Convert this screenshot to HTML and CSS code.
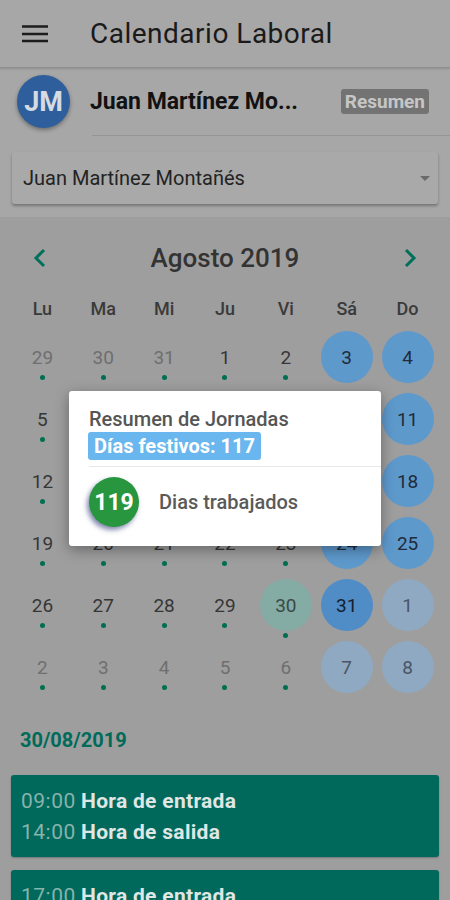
FILE: index.html
```html
<!DOCTYPE html>
<html lang="es">
<head>
<meta charset="utf-8">
<link rel="stylesheet" href="styles.css">
</head>
<body>
<div class="screen">
  <header class="appbar">
    <svg class="menu" width="26" height="20" viewBox="0 0 26 20"><path d="M0 2.5H26M0 10H26M0 17H26" stroke="#1c1c1c" stroke-width="2.6"/></svg>
    <h1 class="title">Calendario Laboral</h1>
  </header>
  <section class="top">
    <div class="user">
      <div class="avatar">JM</div>
      <div class="uname">Juan Martínez Mo...</div>
      <span class="badge">Resumen</span>
    </div>
    <div class="divider"></div>
    <div class="select">
      <span>Juan Martínez Montañés</span>
      <svg width="10" height="5" viewBox="0 0 10 5"><path d="M0 0H10L5 5Z" fill="#6a6a6a"/></svg>
    </div>
  </section>
  <section class="cal">
    <div class="month">
      <svg width="14" height="20" viewBox="0 0 14 20"><path d="M11 2L3 10L11 18" fill="none" stroke="#00705a" stroke-width="3"/></svg>
      <span class="mtitle">Agosto 2019</span>
      <svg width="14" height="20" viewBox="0 0 14 20"><path d="M3 2L11 10L3 18" fill="none" stroke="#00705a" stroke-width="3"/></svg>
    </div>
    <div class="week">
      <span>Lu</span><span>Ma</span><span>Mi</span><span>Ju</span><span>Vi</span><span>Sá</span><span>Do</span>
    </div>
    <div class="grid">
      <div class="cell other"><span class="n">29</span><i class="dot"></i></div>
      <div class="cell other"><span class="n">30</span><i class="dot"></i></div>
      <div class="cell other"><span class="n">31</span><i class="dot"></i></div>
      <div class="cell"><span class="n">1</span><i class="dot"></i></div>
      <div class="cell"><span class="n">2</span><i class="dot"></i></div>
      <div class="cell"><span class="n c">3</span></div>
      <div class="cell"><span class="n c">4</span></div>

      <div class="cell"><span class="n">5</span><i class="dot"></i></div>
      <div class="cell"><span class="n">6</span><i class="dot"></i></div>
      <div class="cell"><span class="n">7</span><i class="dot"></i></div>
      <div class="cell"><span class="n">8</span><i class="dot"></i></div>
      <div class="cell"><span class="n">9</span><i class="dot"></i></div>
      <div class="cell"><span class="n c">10</span></div>
      <div class="cell"><span class="n c">11</span></div>

      <div class="cell"><span class="n">12</span><i class="dot"></i></div>
      <div class="cell"><span class="n">13</span><i class="dot"></i></div>
      <div class="cell"><span class="n">14</span><i class="dot"></i></div>
      <div class="cell"><span class="n">15</span><i class="dot"></i></div>
      <div class="cell"><span class="n">16</span><i class="dot"></i></div>
      <div class="cell"><span class="n c">17</span></div>
      <div class="cell"><span class="n c">18</span></div>

      <div class="cell"><span class="n">19</span><i class="dot"></i></div>
      <div class="cell"><span class="n">20</span><i class="dot"></i></div>
      <div class="cell"><span class="n">21</span><i class="dot"></i></div>
      <div class="cell"><span class="n">22</span><i class="dot"></i></div>
      <div class="cell"><span class="n">23</span><i class="dot"></i></div>
      <div class="cell"><span class="n c">24</span></div>
      <div class="cell"><span class="n c">25</span></div>

      <div class="cell"><span class="n">26</span><i class="dot"></i></div>
      <div class="cell"><span class="n">27</span><i class="dot"></i></div>
      <div class="cell"><span class="n">28</span><i class="dot"></i></div>
      <div class="cell"><span class="n">29</span><i class="dot"></i></div>
      <div class="cell"><span class="n sel">30</span><i class="dot low"></i></div>
      <div class="cell"><span class="n c strong">31</span></div>
      <div class="cell other"><span class="n c faded">1</span></div>

      <div class="cell other"><span class="n">2</span><i class="dot"></i></div>
      <div class="cell other"><span class="n">3</span><i class="dot"></i></div>
      <div class="cell other"><span class="n">4</span><i class="dot"></i></div>
      <div class="cell other"><span class="n">5</span><i class="dot"></i></div>
      <div class="cell other"><span class="n">6</span><i class="dot"></i></div>
      <div class="cell other"><span class="n c faded">7</span></div>
      <div class="cell other"><span class="n c faded">8</span></div>
    </div>
    <div class="date">30/08/2019</div>
    <div class="card">
      <div class="row"><span class="time">09:00</span><span class="lbl">Hora de entrada</span></div>
      <div class="row"><span class="time">14:00</span><span class="lbl">Hora de salida</span></div>
    </div>
    <div class="card">
      <div class="row"><span class="time">17:00</span><span class="lbl">Hora de entrada</span></div>
      <div class="row"><span class="time">20:00</span><span class="lbl">Hora de salida</span></div>
    </div>
  </section>

  <div class="dialog">
    <div class="dtitle">Resumen de Jornadas</div>
    <span class="hl">Días festivos: 117</span>
    <div class="dsep"></div>
    <div class="drow">
      <span class="gcircle">119</span>
      <span class="dlabel">Dias trabajados</span>
    </div>
  </div>
</div>
</body>
</html>
```
FILE: styles.css
```css
* { box-sizing: border-box; margin: 0; padding: 0; }
html, body { width: 450px; height: 900px; overflow: hidden; }
body { font-family: Roboto, "Noto Sans", sans-serif; background: #9e9e9e; }
.screen { position: relative; width: 450px; height: 900px; overflow: hidden; }

.appbar {
  height: 68px; background: #a7a7a7; display: flex; align-items: center;
  padding-left: 22px; border-bottom: 1px solid #8f8f8f;
  box-shadow: 0 1px 2px rgba(0,0,0,0.15);
  position: relative; z-index: 1;
}
.menu { display: block; }
.title { font-size: 28px; font-weight: 400; color: #1a1a1a; margin-left: 42px; letter-spacing: 0.5px; }

.top { background: #a7a7a7; padding-bottom: 13px; }
.user { height: 67px; display: flex; align-items: center; padding: 0 21px 0 17px; }
.avatar {
  width: 53px; height: 53px; border-radius: 50%; background: #2f5e9c; color: #d6dbe3;
  font-weight: 700; font-size: 27px; display: flex; align-items: center; justify-content: center;
  box-shadow: 0 2px 4px rgba(0,0,0,0.35);
}
.uname { margin-left: 20px; font-size: 23px; font-weight: 700; color: #121212; flex: 1; white-space: nowrap; }
.badge {
  background: #737373; color: #c6c6c6; font-weight: 700; font-size: 19px;
  padding: 0 4px; height: 25px; line-height: 25px; border-radius: 3px;
}
.divider { margin-left: 92px; height: 1px; background: #959595; }
.select {
  margin: 16px 12px 0; height: 52px; background: #a9a9a9; border-radius: 3px;
  box-shadow: 0 2px 3px rgba(0,0,0,0.3);
  display: flex; align-items: center; justify-content: space-between; padding: 0 8px 0 11px;
  font-size: 20px; color: #232323;
}

.cal { padding-top: 19px; }
.month { height: 44px; display: flex; align-items: center; justify-content: space-between; padding: 0 33px; }
.month svg { display: block; }
.mtitle { font-size: 26px; font-weight: 500; color: #333; }
.week {
  margin-top: 14px; height: 30px; display: grid; grid-template-columns: repeat(7, 1fr);
  padding: 0 12px; font-size: 18px; font-weight: 500; color: #3a3a3a; text-align: center; line-height: 30px;
}
.grid { margin-top: 2px; display: grid; grid-template-columns: repeat(7, 1fr); grid-auto-rows: 62px; padding: 0 12px; }
.cell { position: relative; display: flex; justify-content: center; padding-top: 5px; }
.n {
  width: 52px; height: 52px; border-radius: 50%; display: flex; align-items: center; justify-content: center;
  font-size: 19px; color: #363636;
}
.other .n { color: #6f6f6f; }
.n.c { background: #5e99cc; color: #1f2b3a; }
.n.strong { background: #508dc6; color: #14202e; }
.n.faded { background: #8fa9c3; color: #4a5664; }
.n.sel { background: #84aba4; color: #3a4a48; }
.dot {
  position: absolute; left: 50%; top: 49px; width: 5px; height: 5px; margin-left: -2.5px;
  border-radius: 50%; background: #006e50;
}
.dot.low { top: 59px; }

.date { margin: 30px 0 0 20px; font-size: 20px; font-weight: 700; color: #006b5a; height: 24px; line-height: 24px; }
.card {
  margin: 23px 11px 0; background: #00695c; border-radius: 3px; padding: 10px 10px;
  box-shadow: 0 1px 2px rgba(0,0,0,0.25);
}
.card + .card { margin-top: 13px; }
.row { height: 31px; display: flex; align-items: center; font-size: 21px; }
.time { color: #86b3ab; width: 60px; letter-spacing: 0.5px; }
.lbl { color: #dfe6e4; font-weight: 700; letter-spacing: 0.3px; }

.dialog {
  position: absolute; left: 69px; top: 391px; width: 312px; height: 155px;
  background: #fff; border-radius: 3px; box-shadow: 0 4px 14px rgba(0,0,0,0.35);
  padding: 16px 0 0 20px;
}
.dtitle { font-size: 20px; font-weight: 500; color: #555; line-height: 24px; }
.hl {
  display: inline-block; margin-top: 1px; margin-left: -1px; background: #6ab6ee; color: #fff;
  font-weight: 700; font-size: 20px; height: 28px; line-height: 28px; padding: 0 6px; border-radius: 3px;
}
.dsep { margin-top: 6px; height: 1px; background: #e8e8e8; }
.drow { display: flex; align-items: center; margin-top: 10px; }
.gcircle {
  width: 50px; height: 50px; border-radius: 50%; background: #27963f; color: #fff;
  font-weight: 700; font-size: 23px; display: flex; align-items: center; justify-content: center;
  box-shadow: -2px 3px 5px rgba(30,40,110,0.55);
}
.dlabel { margin-left: 20px; font-size: 20px; font-weight: 500; color: #5a5a5a; }
```
